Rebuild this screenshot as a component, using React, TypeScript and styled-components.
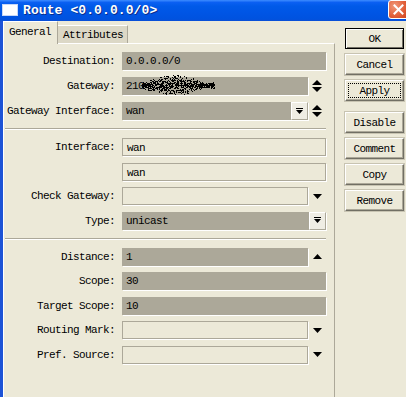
import React from 'react';
import styled, { createGlobalStyle, css } from 'styled-components';

const Global = createGlobalStyle`
  html, body { margin: 0; padding: 0; background: #ECE9D8; overflow: hidden; }
  body { font-family: "Liberation Mono", "DejaVu Sans Mono", monospace; }
`;

const Window = styled.div`
  width: 406px;
  height: 397px;
  display: flex;
  flex-direction: column;
  background: #ECE9D8;
  overflow: hidden;
`;

const TitleBar = styled.div`
  height: 21px;
  flex: none;
  display: flex;
  align-items: center;
  padding-left: 3px;
  gap: 6px;
  background: linear-gradient(#3d8cff 0%, #0a5ff2 12%, #005ae8 30%, #0055e5 60%, #0052df 90%, #0a4fd6 100%);
`;

const TitleIcon = styled.div`
  width: 14px;
  height: 10px;
  background: #fff;
  box-shadow: 0 0 0 1px #c8d8f6;
  margin-top: -2px;
`;

const TitleText = styled.div`
  color: #fff;
  font-weight: bold;
  font-size: 13px;
  letter-spacing: 0.1px;
  text-shadow: 1px 1px 0 #0a2e8c;
  white-space: pre;
`;

const CloseBtn = styled.div`
  margin-left: auto;
  margin-right: -3px;
  width: 21px;
  height: 19px;
  margin-top: -2px;
  box-sizing: border-box;
  border: 1px solid #fff;
  border-radius: 3px;
  background: radial-gradient(circle at 30% 30%, #f0997a, #e2603a 55%, #c8411d);
  display: flex;
  align-items: center;
  justify-content: center;
`;

const Body = styled.div`
  flex: 1;
  display: flex;
  border-left: 3px solid #1d53d6;
  min-height: 0;
`;

const TabArea = styled.div`
  width: 332px;
  display: flex;
  flex-direction: column;
`;

const TabStrip = styled.div`
  height: 23px;
  display: flex;
  align-items: flex-end;
  margin-bottom: -1px;
  position: relative;
  z-index: 1;
`;

const Tab = styled.div<{ $active?: boolean }>`
  box-sizing: border-box;
  font-size: 11px;
  letter-spacing: -0.6px;
  color: #000;
  padding-left: 5px;
  display: flex;
  align-items: center;
  ${(p) =>
    p.$active
      ? css`
          width: 55px;
          height: 23px;
          background: #ECE9D8;
          border-top: 1px solid #fff;
          border-left: 1px solid #fff;
          border-right: 1px solid #aca899;
          padding-bottom: 2px;
        `
      : css`
          width: 70px;
          height: 18px;
          background: #dcd8c6;
          border-top: 1px solid #fff;
          border-right: 1px solid #aca899;
          margin-bottom: 1px;
          padding-left: 5px;
        `}
`;

const Panel = styled.div`
  flex: 1;
  box-sizing: border-box;
  border-top: 1px solid #fff;
  border-left: 1px solid #fff;
  border-right: 1px solid #aca899;
  padding: 8px 8px 0 0;
  display: flex;
  flex-direction: column;
`;

const Section = styled.div<{ $gap: number }>`
  display: flex;
  flex-direction: column;
  gap: ${(p) => p.$gap}px;
`;

const Separator = styled.div`
  height: 0;
  border-top: 1px solid #aca899;
  border-bottom: 1px solid #fff;
  margin: 8px 0 8px 1px;
`;

const Row = styled.div`
  display: grid;
  grid-template-columns: 114px 190px 18px;
  align-items: center;
  height: 18px;
`;

const Label = styled.div`
  font-size: 11px;
  letter-spacing: -0.6px;
  text-align: right;
  padding-right: 3px;
  white-space: pre;
  color: #000;
`;

const Field = styled.div<{ $ro?: boolean; $full?: boolean }>`
  position: relative;
  box-sizing: border-box;
  height: 18px;
  display: flex;
  align-items: stretch;
  grid-column: ${(p) => (p.$full ? '2 / 4' : '2 / 3')};
  margin-left: 4px;
  ${(p) =>
    p.$ro
      ? css`
          background: #aca899;
          box-shadow: 1px 1px 0 #fff;
        `
      : css`
          background: #ECE9D8;
          border: 1px solid #aca899;
          box-shadow: 1px 1px 0 #fff;
        `}
`;

const Value = styled.div`
  flex: 1;
  font-size: 11px;
  letter-spacing: -0.6px;
  line-height: 18px;
  padding-left: 4px;
  color: #000;
  white-space: pre;
  overflow: visible;
`;

const DropBtn = styled.div`
  width: 17px;
  flex: none;
  box-sizing: border-box;
  background: #efede4;
  border-top: 1px solid #fff;
  border-left: 1px solid #fff;
  border-right: 1px solid #aca899;
  border-bottom: 1px solid #aca899;
  display: flex;
  align-items: center;
  justify-content: center;
`;

const ArrowCell = styled.div`
  display: flex;
  align-items: center;
  justify-content: center;
  height: 18px;
`;

const Noise = styled.svg`
  position: absolute;
  left: 0;
  top: 0;
  overflow: visible;
  pointer-events: none;
`;

const Buttons = styled.div`
  display: flex;
  flex-direction: column;
  gap: 5px;
  padding: 7px 0 0 10px;
`;

const Btn = styled.div<{ $default?: boolean; $focus?: boolean; $spaced?: boolean }>`
  width: 59px;
  height: 21px;
  box-sizing: border-box;
  display: flex;
  align-items: center;
  justify-content: center;
  font-size: 11px;
  letter-spacing: -0.6px;
  color: #000;
  background: #ECE9D8;
  border: 1px solid;
  border-color: #fff #716f64 #716f64 #fff;
  box-shadow: inset -1px -1px 0 #aca899, 0 0 0 1px #c8c4b2;
  ${(p) =>
    p.$default &&
    css`
      border-color: #000;
      box-shadow: inset 1px 1px 0 #fff, inset -1px -1px 0 #716f64;
    `}
  ${(p) =>
    p.$focus &&
    css`
      outline: 1px dotted #000;
      outline-offset: -4px;
    `}
  ${(p) => p.$spaced && css`margin-top: 6px;`}
`;

const UpDownIcon = () => (
  <svg width="10" height="12" viewBox="0 0 10 12">
    <polygon points="0,5 10,5 5,0" fill="#000" />
    <polygon points="0,7 10,7 5,12" fill="#000" />
  </svg>
);

const DownIcon = () => (
  <svg width="9" height="5" viewBox="0 0 9 5">
    <polygon points="0,0 9,0 4.5,5" fill="#000" />
  </svg>
);

const UpIcon = () => (
  <svg width="9" height="5" viewBox="0 0 9 5">
    <polygon points="0,5 9,5 4.5,0" fill="#000" />
  </svg>
);

const DropIcon = () => (
  <svg width="7" height="7" viewBox="0 0 7 7">
    <rect x="0" y="0" width="7" height="1" fill="#000" />
    <polygon points="0,2 7,2 3.5,6" fill="#000" />
  </svg>
);

const CloseIcon = () => (
  <svg width="11" height="11" viewBox="0 0 11 11">
    <path d="M1.5 1.5 L9.5 9.5 M9.5 1.5 L1.5 9.5" stroke="#fff" strokeWidth="2" strokeLinecap="square" />
  </svg>
);

function makeNoise() {
  let s = 424242;
  const rnd = () => {
    s = (s * 1103515245 + 12345) & 0x7fffffff;
    return s / 0x7fffffff;
  };
  const seen = new Set<string>();
  const pts: { x: number; y: number }[] = [];
  for (let i = 0; i < 900; i++) {
    const x = 20 + rnd() * 72;
    const t = (x - 20) / 72;
    const half = 3 + 8 * Math.sin(Math.PI * Math.min(1, t * 1.15));
    const cy = 8;
    const g = (rnd() + rnd() - 1);
    const y = cy + g * half;
    const key = Math.round(x) + ',' + Math.round(y);
    if (seen.has(key)) continue;
    seen.add(key);
    pts.push({ x: Math.round(x), y: Math.round(y) });
  }
  return pts;
}
const noisePts = makeNoise();

type RowDef = {
  label: string;
  value?: string;
  ro?: boolean;
  arrow?: 'updown' | 'down' | 'up';
  drop?: boolean;
  noise?: boolean;
};

const group1: RowDef[] = [
  { label: 'Destination:', value: '0.0.0.0/0', ro: true },
  { label: 'Gateway:', value: '210', ro: true, arrow: 'updown', noise: true },
  { label: 'Gateway Interface:', value: 'wan', ro: true, arrow: 'updown', drop: true },
];
const group2: RowDef[] = [
  { label: 'Interface:', value: 'wan' },
  { label: '', value: 'wan' },
  { label: 'Check Gateway:', value: '', arrow: 'down' },
  { label: 'Type:', value: 'unicast', ro: true, drop: true },
];
const group3: RowDef[] = [
  { label: 'Distance:', value: '1', ro: true, arrow: 'up' },
  { label: 'Scope:', value: '30', ro: true },
  { label: 'Target Scope:', value: '10', ro: true },
  { label: 'Routing Mark:', value: '', arrow: 'down' },
  { label: 'Pref. Source:', value: '', arrow: 'down' },
];

const FormRow = ({ r }: { r: RowDef }) => (
  <Row>
    <Label>{r.label}</Label>
    <Field $ro={r.ro} $full={!r.arrow}>
      <Value>{r.value}</Value>
      {r.drop && (
        <DropBtn>
          <DropIcon />
        </DropBtn>
      )}
      {r.noise && (
        <Noise width="100" height="24">
          {noisePts.map((p, i) => (
            <rect key={i} x={p.x} y={p.y} width="1" height="1" fill="#000" />
          ))}
        </Noise>
      )}
    </Field>
    {r.arrow && (
      <ArrowCell>
        {r.arrow === 'updown' ? <UpDownIcon /> : r.arrow === 'down' ? <DownIcon /> : <UpIcon />}
      </ArrowCell>
    )}
  </Row>
);

export default function App() {
  return (
    <>
      <Global />
      <Window>
        <TitleBar>
          <TitleIcon />
          <TitleText>{'Route <0.0.0.0/0>'}</TitleText>
          <CloseBtn>
            <CloseIcon />
          </CloseBtn>
        </TitleBar>
        <Body>
          <TabArea>
            <TabStrip>
              <Tab $active>General</Tab>
              <Tab>Attributes</Tab>
            </TabStrip>
            <Panel>
              <Section $gap={7}>
                {group1.map((r, i) => (
                  <FormRow key={i} r={r} />
                ))}
              </Section>
              <Separator />
              <Section $gap={6.5}>
                {group2.map((r, i) => (
                  <FormRow key={i} r={r} />
                ))}
              </Section>
              <Separator />
              <Section $gap={6.5}>
                {group3.map((r, i) => (
                  <FormRow key={i} r={r} />
                ))}
              </Section>
            </Panel>
          </TabArea>
          <Buttons>
            <Btn $default>OK</Btn>
            <Btn>Cancel</Btn>
            <Btn $focus>Apply</Btn>
            <Btn $spaced>Disable</Btn>
            <Btn>Comment</Btn>
            <Btn>Copy</Btn>
            <Btn>Remove</Btn>
          </Buttons>
        </Body>
      </Window>
    </>
  );
}
